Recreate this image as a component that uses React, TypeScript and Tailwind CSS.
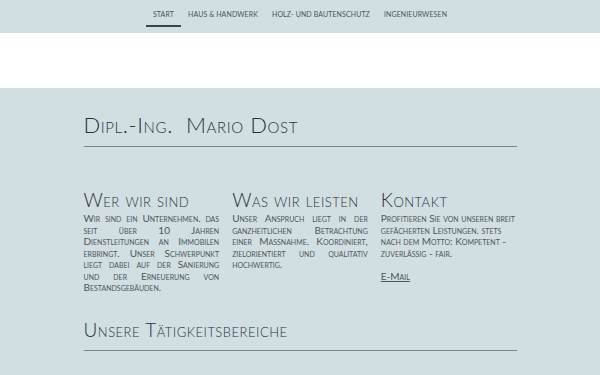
import React from "react";

export default function App() {
  const body = "text-[10px] leading-[11.5px] text-[#4f5558] [font-variant:small-caps]";
  const h2 = "text-[19px] leading-[22px] text-[#2b3033] font-light tracking-[0.5px] [font-variant:small-caps]";
  return (
    <div className="w-[600px] h-[375px] overflow-hidden bg-[#d1dfe3] font-['Lato','Open_Sans',sans-serif]">
      <nav className="h-[33px] flex justify-center items-start">
        {["Start", "Haus & Handwerk", "Holz- und Bautenschutz", "Ingenieurwesen"].map((t, i) => (
          <div key={t} className="relative h-[27px] pt-[1px] px-[7px] flex items-center">
            <span className="text-[7px] uppercase tracking-[0.1px] text-[#4d5356]">{t}</span>
            {i === 0 && <div className="absolute left-0 right-0 bottom-0 h-[2px] bg-[#3d4446]" />}
          </div>
        ))}
      </nav>
      <div className="h-[55px] bg-white" />
      <div className="w-[433px] mx-auto pt-[23px]">
        <h1 className="text-[22px] leading-[28px] text-[#2b3033] tracking-[0.6px] font-light [font-variant:small-caps]">
          Dipl.-Ing.&nbsp; Mario Dost
        </h1>
        <div className="mt-[7px] h-px bg-[#7b8486]" />
        <div className="grid grid-cols-3 gap-[13px] mt-[42px]">
          <div>
            <h2 className={h2}>Wer wir sind</h2>
            <p className={`${body} text-justify mt-[2px]`}>
              Wir sind ein Unternehmen. das seit über 10 Jahren Dienstleitungen an Immobilen erbringt. Unser Schwerpunkt liegt dabei auf der Sanierung und der Erneuerung von Bestandsgebäuden.
            </p>
          </div>
          <div>
            <h2 className={h2}>Was wir leisten</h2>
            <p className={`${body} text-justify mt-[2px]`}>
              Unser Anspruch liegt in der ganzheitlichen Betrachtung einer Massnahme. Koordiniert, zielorientiert und qualitativ hochwertig.
            </p>
          </div>
          <div>
            <h2 className={h2}>Kontakt</h2>
            <p className={`${body} mt-[2px]`}>
              Profitieren Sie von unseren breit gefächerten Leistungen. stets nach dem Motto: Kompetent - zuverlässig - fair.
            </p>
            <p className={`${body} mt-[11.5px] underline`}>E-Mail</p>
          </div>
        </div>
        <h2 className="mt-[24px] text-[19px] leading-[24px] text-[#2b3033] font-light tracking-[0.5px] [font-variant:small-caps]">Unsere Tätigkeitsbereiche</h2>
        <div className="mt-[8px] h-px bg-[#7b8486]" />
      </div>
    </div>
  );
}
